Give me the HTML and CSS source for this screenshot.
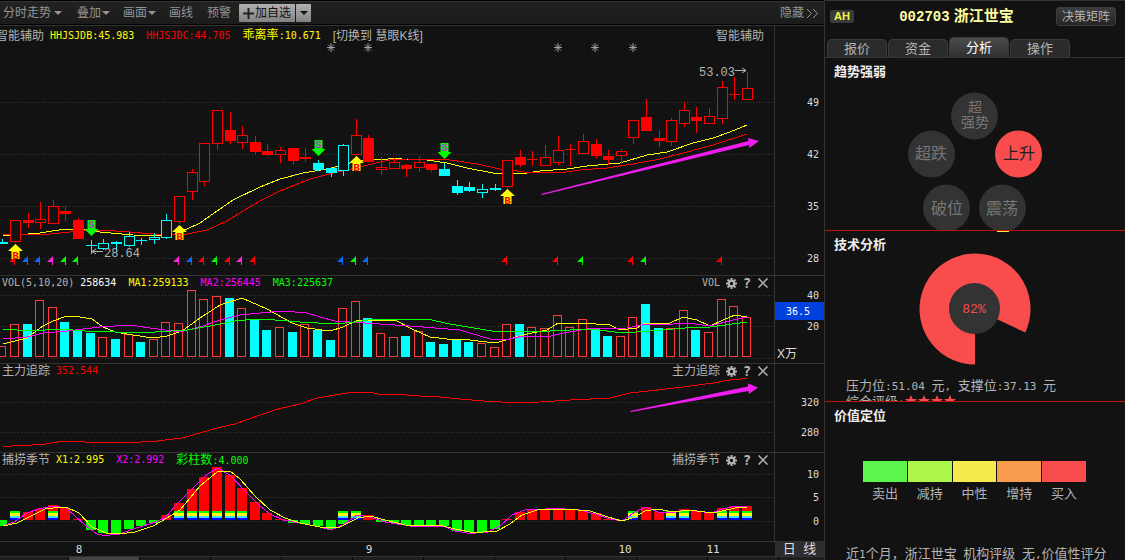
FILE: index.html
```html
<!DOCTYPE html>
<html lang="zh-CN">
<head>
<meta charset="utf-8">
<title>浙江世宝 002703</title>
<link rel="stylesheet" href="styles.css">
</head>
<body>
<svg class="defs" width="0" height="0" aria-hidden="true">
  <symbol id="gear" viewBox="0 0 12 12"><g fill="none" stroke="currentColor"><circle cx="6" cy="6" r="3" stroke-width="2.4"/><path d="M6 0v2.4M6 9.600v2.400M0 6h2.400M9.600 6H12M1.700 1.700l1.800 1.800M8.500 8.500l1.800 1.800M1.700 10.300l1.800-1.800M8.500 3.500l1.800-1.800" stroke-width="2.300"/></g></symbol>
  <symbol id="close" viewBox="0 0 10 10"><path d="M.500.500l9 9M9.500.500l-9 9" fill="none" stroke="currentColor" stroke-width="1.500"/></symbol>
  <symbol id="caret" viewBox="0 0 8 4"><path d="M0 0h8L4 4z" fill="currentColor"/></symbol>
</svg>
<main class="charts">
  <nav class="toolbar">
    <button class="tool wide">分时走势<svg class="caret"><use href="#caret"/></svg></button>
    <button class="tool drop">叠加<svg class="caret"><use href="#caret"/></svg></button>
    <button class="tool drop">画面<svg class="caret"><use href="#caret"/></svg></button>
    <button class="tool">画线</button>
    <button class="tool">预警</button>
    <span class="split"><button class="add"><svg class="plus" viewBox="0 0 11 11"><path d="M5.500 0v11M0 5.500h11" stroke="#222" stroke-width="2"/></svg>加自选</button><button class="more" aria-label="更多"><svg class="caret"><use href="#caret"/></svg></button></span>
    <button class="tool hide">隐藏<svg class="chevrons" viewBox="0 0 12 9"><path d="M1 0l4.500 4.500L1 9M7 0l4.500 4.500L7 9" fill="none" stroke="currentColor"/></svg></button>
  </nav>

  <section class="pane pane-k">
    <div class="plot">
      <svg id="k" viewBox="0 26 774 249" preserveAspectRatio="none"></svg>
      <header class="legend legend-k">
        <span>智能辅助</span><span class="num yellow">HHJSJDB:45.983</span><span class="num red gap">HHJSJDC:44.705</span><span class="yellow gap">乖离率<span class="num">:10.671</span></span><a href="#" class="gap">[切换到 慧眼K线]</a>
        <span class="pane-name last">智能辅助</span>
      </header>
    </div>
    <svg class="axis" id="k-axis" viewBox="775 26 49 249" preserveAspectRatio="none"></svg>
  </section>

  <section class="pane pane-vol">
    <div class="plot">
      <svg id="vol" viewBox="0 276 774 87" preserveAspectRatio="none"></svg>
      <header class="legend">
        <span class="num">VOL(5,10,20)</span><span class="num white">258634</span><span class="num yellow gap">MA1:259133</span><span class="num magenta gap">MA2:256445</span><span class="num green gap">MA3:225637</span>
        <span class="pane-name num">VOL</span><button class="icon" aria-label="设置"><svg class="gear"><use href="#gear"/></svg></button><button class="icon help">?</button><button class="icon" aria-label="关闭"><svg class="close"><use href="#close"/></svg></button>
      </header>
    </div>
    <svg class="axis" id="vol-axis" viewBox="775 276 49 87" preserveAspectRatio="none"></svg>
  </section>

  <section class="pane pane-main">
    <div class="plot">
      <svg id="force" viewBox="0 364 774 88" preserveAspectRatio="none"></svg>
      <header class="legend">
        <span>主力追踪</span><span class="num red">352.544</span>
        <span class="pane-name">主力追踪</span><button class="icon" aria-label="设置"><svg class="gear"><use href="#gear"/></svg></button><button class="icon help">?</button><button class="icon" aria-label="关闭"><svg class="close"><use href="#close"/></svg></button>
      </header>
    </div>
    <svg class="axis" id="force-axis" viewBox="775 364 49 88" preserveAspectRatio="none"></svg>
  </section>

  <section class="pane pane-main">
    <div class="plot">
      <svg id="season" viewBox="0 453 774 88" preserveAspectRatio="none"></svg>
      <header class="legend">
        <span>捕捞季节</span><span class="num yellow">X1:2.995</span><span class="num magenta gap">X2:2.992</span><span class="green gap">彩柱数<span class="num">:4.000</span></span>
        <span class="pane-name">捕捞季节</span><button class="icon" aria-label="设置"><svg class="gear"><use href="#gear"/></svg></button><button class="icon help">?</button><button class="icon" aria-label="关闭"><svg class="close"><use href="#close"/></svg></button>
      </header>
    </div>
    <svg class="axis" id="season-axis" viewBox="775 453 49 88" preserveAspectRatio="none"></svg>
  </section>

  <footer class="months">
    <svg id="months" viewBox="0 542 774 14" preserveAspectRatio="none"></svg>
    <button class="period">日 线</button>
  </footer>
  <div class="strip"><i></i><i class="on"></i><i></i><i></i><i></i><i></i><i></i><i></i><i></i><i></i><i></i><i></i></div>
</main>

<aside class="side">
  <header class="stock">
    <span class="badge">AH</span>
    <h1><span class="code">002703</span> 浙江世宝</h1>
    <button class="matrix">决策矩阵</button>
  </header>
  <nav class="tabs"><button>报价</button><button>资金</button><button class="active">分析</button><button>操作</button></nav>
  <section class="box box-trend">
    <h2>趋势强弱</h2>
    <svg class="trend" viewBox="0 0 300 150">
      <g fill="#333">
        <circle cx="149.500" cy="34" r="23.500"/><circle cx="106.500" cy="72" r="23.500"/><circle cx="121.500" cy="126" r="23.500"/><circle cx="177.500" cy="126" r="23.500"/>
      </g>
      <circle cx="193.500" cy="72" r="23.500" fill="#f94c4c"/>
      <g class="states">
        <text x="150" y="30">超</text><text x="150" y="45">强势</text><text x="106" y="77" class="big">超跌</text><text x="122" y="132" class="big">破位</text><text x="177" y="132" class="big">震荡</text><text x="194" y="77" class="big now">上升</text>
      </g>
    </svg>
  </section>
  <section class="box box-tech">
    <h2>技术分析</h2>
    <svg class="donut" viewBox="0 0 300 112">
      <path d="M150 56V111.500A55.500 55.500 0 1 1 200.300 79.500z" fill="#f94c4c"/>
      <circle cx="149.500" cy="55.500" r="25.500" fill="#333"/>
      <text x="149" y="60">82%</text>
    </svg>
    <p class="levels">压力位<span class="num">:51.04 </span>元<span class="num">, </span>支撑位<span class="num">:37.13 </span>元</p>
    <p class="rating">综合评级<span class="num">:</span><svg class="stars" viewBox="0 0 52 12"><path id="star" fill="#f94c4c" d="M6 0l1.700 4H12L8.600 6.800 10 11.500 6 8.800 2 11.500 3.400 6.800 0 4h4.300z"/><use href="#star" x="13"/><use href="#star" x="26"/><use href="#star" x="39"/></svg></p>
  </section>
  <section class="box box-value">
    <h2>价值定位</h2>
    <ul class="scale">
      <li><i class="s1"></i>卖出</li><li><i class="s2"></i>减持</li><li><i class="s3"></i>中性</li><li><i class="s4"></i>增持</li><li><i class="s5"></i>买入</li>
    </ul>
    <p class="note">近<span class="num">1</span>个月，浙江世宝<span class="num"> </span>机构评级<span class="num"> </span>无<span class="num">,</span>价值性评分</p>
  </section>
</aside>
<script src="charts.js"></script>
</body>
</html>
```

FILE: styles.css
```css
* { box-sizing: border-box; }
body {
  margin: 0;
  min-height: 100vh;
  height: 100vh;
  display: grid;
  grid-template-columns: minmax(0, 1fr) 301px;
  grid-template-rows: minmax(0, 1fr);
  overflow: hidden;
  background: #121212;
  color: #b4b4b4;
  font: 12px/14px "Liberation Sans", "Noto Sans CJK SC", sans-serif;
}
button { font: inherit; color: inherit; background: none; border: 0; padding: 0; white-space: nowrap; }
h1, h2, p, ul { margin: 0; padding: 0; }
.defs { position: absolute; }
.num { font-family: "DejaVu Sans Mono", monospace; font-size: 10px; white-space: pre; }
.yellow { color: #ff0; }
.red { color: #f00; }
.magenta { color: #f0f; }
.green { color: #0f0; }
.white { color: #fff; }

.charts { display: flex; flex-direction: column; min-width: 0; }
.toolbar {
  display: flex;
  align-items: center;
  height: 26px;
  flex: none;
  padding: 2px 6px 2px 3px;
  border-top: 1px solid #000;
  border-bottom: 1px solid #333;
  background: linear-gradient(#333 1px, #222 1px, #1b1b1b 23px, #000 23px);
  color: #949494;
}
.tool { display: flex; align-items: center; gap: 3px; margin-right: 14px; }
.tool.wide { margin-right: 15px; }
.tool.drop { gap: 1px; margin-right: 13px; }
.caret { width: 8px; height: 4px; }
.split { display: flex; gap: 1px; margin-left: -6px; color: #111; }
.add, .more { height: 18px; background: linear-gradient(#b0b0b0, #828282); border-radius: 1px; }
.add { display: flex; align-items: center; gap: 1px; width: 56px; padding-left: 4px; }
.plus { width: 11px; height: 11px; }
.more { width: 15px; display: flex; align-items: center; justify-content: center; }
.hide { margin-left: auto; margin-right: 0; gap: 2px; }
.chevrons { width: 12px; height: 9px; }

.pane { display: grid; grid-template: minmax(0, 1fr) / minmax(0, 1fr) 50px; border-bottom: 1px solid #333; min-height: 0; }
.pane-k { flex: 250 1 250px; }
.pane-vol { flex: 88 1 88px; }
.pane-main { flex: 89 1 89px; }
.plot { display: grid; grid-template: minmax(0, 1fr) / minmax(0, 1fr); }
.plot > * { grid-area: 1 / 1; }
.plot > svg, .axis { display: block; width: 100%; height: 100%; min-height: 0; }
.plot polyline, .plot rect { shape-rendering: crispEdges; }
.axis { border-left: 1px solid #333; }
.legend { display: flex; align-items: center; align-self: start; gap: 6px; height: 14px; padding: 0 6px 0 2px; white-space: nowrap; }
.legend-k { height: 19px; padding: 0 10px 0 0; }
.legend-k > span:first-child { margin-left: -4px; }
.legend .gap { margin-left: 6px; }
.legend a { color: inherit; text-decoration: none; }
.pane-name { margin-left: auto; }
.icon { display: flex; align-items: center; justify-content: center; width: 10px; height: 14px; }
.gear { width: 11px; height: 11px; flex: none; }
.close { width: 10px; height: 10px; flex: none; }
.help { font: bold 14px/14px "DejaVu Sans Mono", monospace; }
svg text { font-family: "DejaVu Sans Mono", monospace; font-size: 10px; fill: #ddd; }
svg text.note-price { font-family: "Liberation Mono", monospace; font-size: 12px; fill: #b4b4b4; }
svg text.month { font-size: 11px; }
svg text.unit { font-family: "Liberation Sans", "Noto Sans CJK SC", sans-serif; font-size: 12px; }
svg text.signal { font-family: "Liberation Mono", monospace; font-weight: bold; font-size: 11px; }

.months { display: grid; grid-template-columns: minmax(0, 1fr) 50px; height: 15px; flex: none; border-bottom: 1px solid #333; }
.months svg { width: 100%; height: 14px; display: block; }
.period { margin-left: 1px; background: #2d2d2d; color: #ddd; font-size: 13px; line-height: 14px; word-spacing: 4px; }
.strip { display: flex; flex: none; height: 3px; overflow: hidden; margin-left: -2px; }
.strip i { flex: 0 0 71px; background: #1f1f1f; border-right: 1px solid #000; }
.strip .on { background: #444; }

.side { display: flex; flex-direction: column; min-width: 0; border-left: 1px solid #333; border-top: 1px solid #333; font-size: 13px; }
.stock { display: flex; align-items: center; justify-content: space-between; height: 31px; padding: 0 9px 0 5px; flex: none; }
.badge { width: 24px; height: 13px; border-radius: 2px; background: #3b3b3b; color: #f4f444; font: bold 11px/13px "Liberation Sans", sans-serif; text-align: center; }
.stock h1 { font-size: 15px; line-height: 18px; font-weight: bold; color: #ffffa0; margin-left: 3px; }
.code { font-family: "Liberation Mono", monospace; font-size: 14px; }
.matrix { width: 60px; height: 19px; border: 1px solid #3b3b3b; border-radius: 3px; background: linear-gradient(#3c3c3c, #252525); font-size: 12px; line-height: 16px; }
.tabs { display: flex; align-items: flex-end; gap: 1px; height: 26px; flex: none; padding-left: 2px; border-bottom: 1px solid #333; font-size: 13px; }
.tabs button { width: 60px; height: 18px; border: 1px solid #3b3b3b; border-bottom: 0; border-radius: 5px 5px 0 0; background: #2b2b2b; line-height: 16px; }
.tabs .active { height: 20px; background: linear-gradient(#4c4c4c, #303030); color: #fff; }
.box { overflow: hidden; min-height: 0; border-bottom: 1px solid #c0120c; }
.box-trend { flex: 173 1 173px; }
.box-tech { flex: 171 1 171px; position: relative; }
.box-tech::before { content: ""; position: absolute; top: 0; left: 172px; width: 12px; height: 1px; background: #f6ea4c; }
.box-value { flex: 158 1 158px; border-bottom: 0; }
.box h2 { padding: 6px 9px 0; font-size: 13px; line-height: 15px; color: #eee; }
.box .num { font-size: 11px; }
.trend { display: block; width: 100%; height: 150px; margin-top: 3px; }
.states text { font-family: "Liberation Sans", "Noto Sans CJK SC", sans-serif; font-size: 14px; text-anchor: middle; fill: #777; }
.states text.big { font-size: 16px; }
.states text.now { fill: #222; }
.donut { display: block; width: 100%; height: 112px; margin-top: 1px; }
.donut text { fill: #f94c4c; font-family: "Liberation Mono", monospace; font-size: 13px; text-anchor: middle; }
.levels { padding: 13px 0 0 21px; line-height: 15px; white-space: nowrap; }
.rating { padding-left: 21px; line-height: 15px; white-space: nowrap; }
.stars { width: 52px; height: 12px; vertical-align: -1px; }
.scale { display: grid; grid-template-columns: repeat(5, 1fr); gap: 1px; list-style: none; margin: 38px 39px 0 38px; text-align: center; line-height: 15px; }
.scale i { display: block; height: 21px; margin-bottom: 4px; }
.s1 { background: #5cf64c; }
.s2 { background: #aef64c; }
.s3 { background: #f6ea4c; }
.s4 { background: #f69c4c; }
.s5 { background: #f94c4c; }
.note { margin-top: 45px; padding-left: 21px; line-height: 15px; white-space: nowrap; }
```

FILE: charts.js
```js
const el = id => document.getElementById(id);
const RED = '#f00', CYAN = '#0ff', GREEN = '#0f0', YELLOW = '#ff0', MAGENTA = '#f0f';
const cx = i => Math.round(15 + 12.62 * (i - 1));
const rect = (x, y, w, h, fill) => `<rect x="${x}" y="${y}" width="${w}" height="${h}" fill="${fill}"/>`;
const hollow = (x, y, w, h, c) => `<rect x="${x + 0.5}" y="${y + 0.5}" width="${w - 1}" height="${h - 1}" fill="#121212" stroke="${c}"/>`;
const text = (x, y, s, attrs = '') => `<text x="${x}" y="${y}" ${attrs}>${s}</text>`;
const line = (pts, c) => `<polyline points="${pts}" fill="none" stroke="${c}"/>`;
const grid = ys => ys.map(y => `<path d="M0 ${y + 0.5}H772" stroke="#3a3a3a" stroke-dasharray="1 2"/>`).join('');
const labels = rows => rows.map(([s, y]) => text(819, y + 4, s, 'text-anchor="end"')).join('');

// Candles: kind (r/c filled, R/C hollow, x/y cross), body top, body bottom, high, low
const candles = [
  'c 242 244 239 244', 'R 220 242 220 243', 'r 220 223 213 228', 'R 219 223 202 229', 'R 206 224 200 224',
  'r 211 214 206 221', 'r 220 239 218 239', 'y 245 246 240 254', 'C 243 249 239 250', 'c 242 244 241 252',
  'C 236 246 232 247', 'y 240 241 238 245', 'C 237 240 233 244', 'C 220 238 214 239', 'R 196 222 196 224',
  'R 172 192 169 200', 'R 143 182 143 186', 'R 110 144 110 150', 'r 130 141 112 144', 'R 135 143 126 149',
  'r 142 152 136 155', 'r 151 155 144 156', 'R 150 155 147 163', 'r 148 161 148 165', 'r 157 159 148 162',
  'c 163 170 160 171', 'c 168 173 167 177', 'C 145 171 144 176', 'R 135 155 119 155', 'r 138 162 135 162',
  'R 167 170 157 175', 'R 162 169 158 169', 'r 165 169 164 177', 'R 162 168 156 172', 'r 164 170 164 172',
  'c 169 176 163 176', 'c 186 193 180 195', 'c 187 191 182 192', 'C 189 193 184 198', 'c 188 190 184 191',
  'R 160 187 160 189', 'r 157 165 150 167', 'x 159 160 151 166', 'R 157 166 145 166', 'R 150 163 136 165',
  'x 149 150 144 166', 'R 141 154 134 154', 'r 144 156 139 158', 'r 156 160 150 165', 'R 151 156 149 164',
  'R 120 138 120 144', 'r 117 131 99 131', 'r 138 141 130 147', 'R 120 142 118 146', 'R 110 124 102 127',
  'r 117 121 107 133', 'R 116 124 108 124', 'R 87 119 81 124', 'x 94 95 77 100', 'R 88 100 72 100'
];
const drawCandles = () => candles.map((row, i) => {
  const [kind, t, b, hi, lo] = row.split(' ').map((v, k) => k ? +v : v);
  const color = 'rRx'.includes(kind) ? RED : CYAN;
  const x = cx(i);
  const body = kind === 'R' || kind === 'C' ? hollow(x - 5, t, 11, b - t, color) : rect(x - 5, t, 11, b - t, color);
  return rect(x, hi, 1, lo - hi, color) + body;
}).join('');

const buy = (x, y) => `<path d="M${x + .5} ${y}l7.500 7h-3.500v8h-8v-8h-3.500z" fill="${YELLOW}"/>` +
  text(x + .5, y + 15, 'B', 'text-anchor="middle" class="signal" style="fill:#f00"');
const sell = (x, y) => `<path d="M${x - 3.5} ${y}h8v9h3l-7 7-7-7h3z" fill="${GREEN}"/>` +
  text(x + .5, y + 8, 'S', 'text-anchor="middle" class="signal" style="fill:#b03ccc"');
const flag = ([x, c]) => `<path d="M${x} 256v9h-1v-3h-5z" fill="${c}"/>`;
const star = x => `<path d="M${x} 43v9M${x - 4} 47.500h8M${x - 3} 44.500l6 6M${x + 3} 44.500l-6 6" stroke="#aaa" stroke-width=".9"/>`;
const BLUE = '#0a6cff', PINK = '#ff28d8';

el('k').innerHTML = grid([102, 154, 206, 258]) +
  line('3,236 22,234.500 40,233 65,229 80,229 100,232 133,235 160,235.500 175,234 187,229 200,223 217,211 233,200 260,187 280,179 303,173 327,169 350,163 365,160 383,159.500 393,158.500 402,159 427,160 447,163 467,168 493,173 527,173 540,171 567,169 587,166 620,163 647,155 667,152 693,143 713,138 730,132 747,125', YELLOW) +
  line('3,234 20,235 50,234 80,231 100,230 130,232 153,234 187,234 207,230 227,221 243,211 260,201 280,191 310,179 337,172 360,167 380,162 390,160 407,159 450,160 477,164 500,169 517,171 527,172.500 563,172.500 580,170 607,168 633,164 660,159 687,152 713,145 747,134', RED) +
  drawCandles() +
  [[15, RED], [28, BLUE], [40, BLUE], [53, PINK], [66, GREEN], [78, GREEN], [179, PINK], [192, BLUE], [204, RED], [217, GREEN], [230, RED], [242, PINK], [255, RED], [343, BLUE], [356, GREEN], [368, BLUE], [507, RED], [558, RED], [583, GREEN], [633, RED], [646, GREEN], [722, RED]].map(flag).join('') +
  buy(15, 244) + buy(179, 225) + buy(356, 156) + buy(507, 189) + sell(91, 220) + sell(318, 140) + sell(444, 143) +
  [331, 368, 558, 595, 633].map(star).join('') +
  text(104, 257, '28.64', 'class="note-price"') + text(699, 76, '53.03', 'class="note-price"') +
  '<path d="M103 251.500H92M96 249l-4 2.500 4 2.500M735 70.500h11M742 68l4 2.500-4 2.500" fill="none" stroke="#b4b4b4"/>' +
  '<path d="M541 194l207.500-53-.500-3 11 3-9.500 7-.500-3L542 195z" fill="#f01cf0"/>';
el('k-axis').innerHTML = labels([['49', 102], ['42', 154], ['35', 206], ['28', 258]]);

// Volume bars: tops measured from the pane's scale, R rising and C falling
const volTops = [346, 324, 324, 300, 307, 322, 330, 333, 337, 339, 334, 342, 339, 322, 323, 290, 299, 296, 298, 308, 319, 330, 327, 332, 324, 330, 340, 308, 301, 318, 333, 337, 336, 331, 342, 344, 339, 342, 343, 347, 324, 324, 327, 328, 315, 327, 319, 329, 336, 336, 317, 304, 328, 328, 310, 330, 332, 299, 306, 317];
const volKinds = 'RRCRRCCCRCRCRRRRRRCRCCRCRCCRRCRRCRCCCCRRRCRRRRRCCRRCCRRCRRRR';
el('vol').innerHTML = grid([295, 326, 358]) +
  volTops.map((t, i) => volKinds[i] === 'C' ? rect(cx(i) - 5, t, 9, 357 - t, CYAN) : hollow(cx(i) - 5, t, 9, 357 - t, '#fa3c3c')).join('') +
  line('3,344 27,338 35,332 43,326 53,321 67,316 80,317 92,319 103,327 115,332 133,335 153,338 167,336 182,331 200,318 220,305 242,298 267,309 292,323 307,328 330,331 343,327 358,320 395,320 412,329 430,337 447,339 470,340 495,343 513,338 527,334 547,330 558,323 573,324 582,323 610,325 620,330 637,328 643,324 670,323 683,317 697,320 710,326 723,320 735,315 747,317', YELLOW) +
  line('3,339 27,337 43,333 67,331 100,327 130,325 150,328 180,332 200,327 220,320 240,315 260,313 283,311 307,313 320,317 335,321 350,322 380,324 410,326 460,330 490,339 505,340 523,336 547,337 563,333 587,329 627,328 647,324 673,324 687,323 710,326 733,320 747,317', MAGENTA) +
  line('3,329 30,331 60,329 85,331 115,332 155,332 187,330 210,326 235,321 255,319 275,320 300,322 335,324 355,322 375,319 427,319 450,324 492,331 550,331 590,329 623,333 650,331 685,328 710,327 747,322', GREEN);
el('vol-axis').innerHTML = labels([['40', 295], ['20', 326]]) + rect(775, 302, 49, 18, '#0040dc') +
  text(786, 315, '36.5', 'style="fill:#fff"') + text(777, 358, 'X万', 'class="unit"');

el('force').innerHTML = grid([402, 432]) +
  line('3,446.500 22,445.500 43,444.500 60,441.500 83,441.500 87,442.500 133,442.500 157,441 182,438 200,433 217,428 235,424 260,415 280,408.500 300,404 317,398 335,395 350,392.500 372,392.500 380,394.500 400,394.500 420,396 435,396.500 460,399 490,401.500 513,402.500 540,402 570,400 610,398 630,393 657,390 683,387 713,383 730,380 747,378.500', RED) +
  '<path d="M630 411l118-24.500v-3l10 4-9 6.500-.500-3L631 412z" fill="#f01cf0"/>';
el('force-axis').innerHTML = labels([['320', 402], ['280', 432]]);

// Season histogram: bar ends relative to the zero line at y = 520
const zero = 520;
const ends = [526, 0, 512, 509, 505, 508, 519, 530, 533, 534, 529, 526, 523, 515, 503, 489, 477, 467, 475, 488, 502, 513, 519, 523, 524, 526, 529, 524, 0, 515, 522, 523, 525, 525, 525, 526, 531, 532, 532, 529, 519, 512, 510, 509, 508, 509, 510, 513, 519, 521, 0, 507, 512, 0, 509, 511, 512, 508, 506, 506];
const striped = [1, 4, 14, 15, 16, 17, 18, 19, 27, 28, 50, 53, 54, 57, 58, 59];
const stripe = x => rect(x, 511, 10, 2, GREEN) + rect(x, 513, 10, 3, YELLOW) + rect(x, 516, 10, 2, '#3cdcff') + rect(x, 518, 10, 2, '#00f');
el('season').innerHTML = grid([474, 497, 521]) +
  ends.map((e, i) => !e ? '' : e > zero ? rect(cx(i) - 5, zero, 10, e - zero, GREEN) : rect(cx(i) - 5, e, 10, zero - e, RED)).join('') +
  striped.map(i => stripe(cx(i) - 5)).join('') +
  line('3,526 14,522 27,513 38,509 53,506 66,508 75,516 85,525 97,534 105,535.500 120,534 133,529 150,524 165,518 175,506 190,491 205,476 217,468 230,475 245,491 260,506 270,514 283,520 300,523 320,527 331,530 343,525 357,515 370,517 385,522 410,526 443,526 455,531 470,533.500 488,532 500,526 512,515 525,510 557,508.500 580,510 595,514 610,519 622,521 635,512 646,507 658,512 671,513 683,510 695,511 712,513 722,509 735,506.500 747,506.500', MAGENTA) +
  line('3,526 17,523 33,515 45,509 57,507.500 67,507.500 79,513 92,527 107,533.500 120,534 135,532 153,526 167,518 180,510 200,486 217,472 230,471 240,479 255,496 270,510 285,518 300,523 320,527 340,527 358,518 370,516 385,520 405,525 443,526 455,529 470,532 483,532 497,531 510,524 522,515 537,510 565,509 590,511 608,517 622,521 635,517 645,511 658,509 673,512 690,510 712,513 722,511 735,508 747,507', YELLOW);
el('season-axis').innerHTML = labels([['10', 474], ['5', 497], ['0', 521]]);

el('months').innerHTML = [[79, '8'], [369, '9'], [625, '10'], [713, '11']].map(([x, s]) => text(x, 553, s, 'text-anchor="middle" class="month"')).join('');
```
